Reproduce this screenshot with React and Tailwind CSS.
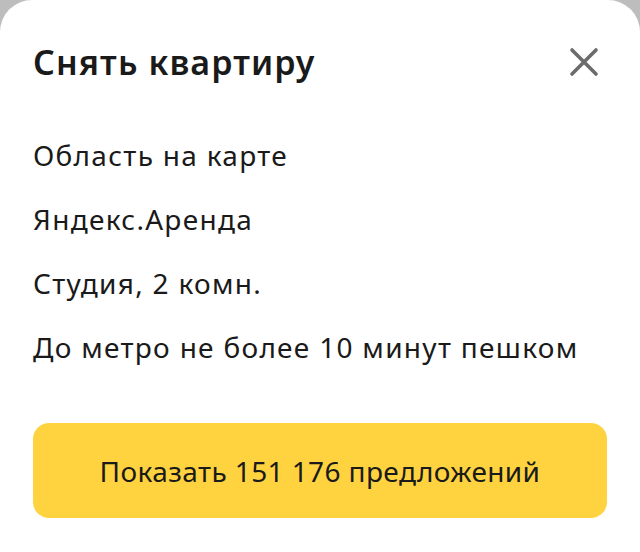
export default function App() {
  const filters = [
    "Область на карте",
    "Яндекс.Аренда",
    "Студия, 2 комн.",
    "До метро не более 10 минут пешком",
  ];

  return (
    <div className="w-[640px] h-[552px] bg-[#bdbdbd] font-['Noto_Sans',sans-serif]">
      <div className="h-full bg-white rounded-t-[32px] px-[33px] pt-[42px]">
        {/* Header */}
        <div className="flex items-center justify-between h-[40px]">
          <h1 className="text-[34px] font-semibold leading-[40px] tracking-[1.1px] text-[#1a1a1a]">
            Снять квартиру
          </h1>
          <button className="w-[40px] h-[40px] mr-[3px] flex items-center justify-center">
            <svg width="30" height="30" viewBox="0 0 30 30" fill="none">
              <path
                d="M3 3L27 27M27 3L3 27"
                stroke="#6b6b6b"
                strokeWidth="3.6"
                strokeLinecap="round"
              />
            </svg>
          </button>
        </div>

        {/* Filters */}
        <div className="mt-[41px] flex flex-col">
          {filters.map((f) => (
            <div
              key={f}
              className="h-[64px] leading-[64px] text-[28px] tracking-[1.3px] text-[#1a1a1a]"
            >
              {f}
            </div>
          ))}
        </div>

        <button className="mt-[44px] w-full h-[95px] rounded-[16px] bg-[#ffd33f] text-[28px] tracking-[0.4px] text-[#1a1a1a]">
          Показать 151 176 предложений
        </button>
      </div>
    </div>
  );
}
